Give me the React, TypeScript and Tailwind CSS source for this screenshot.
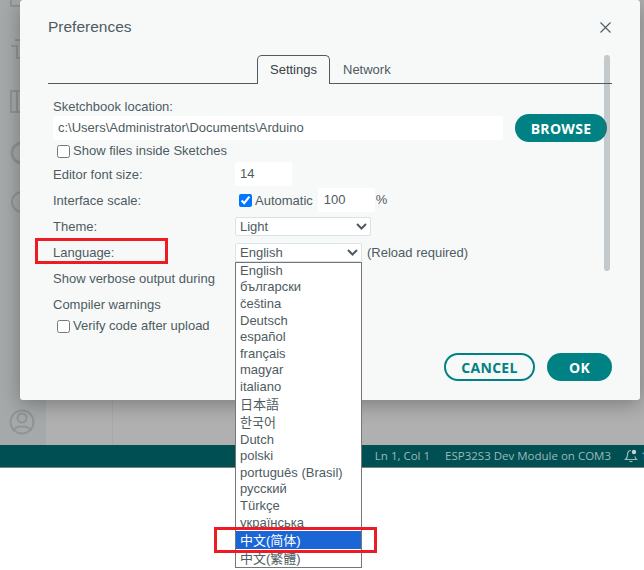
import React from "react";

const LANGS: Array<{ name: string; tall?: boolean; active?: boolean }> = [
  { name: "English" },
  { name: "български" },
  { name: "čeština" },
  { name: "Deutsch" },
  { name: "español" },
  { name: "français" },
  { name: "magyar" },
  { name: "italiano" },
  { name: "日本語", tall: true },
  { name: "한국어", tall: true },
  { name: "Dutch" },
  { name: "polski" },
  { name: "português (Brasil)" },
  { name: "русский" },
  { name: "Türkçe" },
  { name: "українська" },
  { name: "中文(简体)", tall: true, active: true },
  { name: "中文(繁體)", tall: true },
];

const FONT = "font-['Liberation_Sans','Noto_Sans_CJK_SC',sans-serif]";

function Chevron() {
  return (
    <svg width="11" height="7" viewBox="0 0 11 7" fill="none" stroke="#4e5b61" strokeWidth="2">
      <path d="M1 1l4.500 4.500L10 1" />
    </svg>
  );
}

function FakeSelect({ value, width }: { value: string; width: string }) {
  return (
    <div className={`flex h-[19px] items-center justify-between rounded-[2px] border border-[#dae3e3] bg-white pl-[4px] pr-[3px] leading-none ${width}`}>
      <span>{value}</span>
      <Chevron />
    </div>
  );
}

function Row({ label, children }: { label: string; children?: React.ReactNode }) {
  return (
    <div className="flex h-[26px] items-center">
      <div className="w-[182px] shrink-0 whitespace-nowrap pt-px">{label}</div>
      {children}
    </div>
  );
}

function CheckRow({ label }: { label: string }) {
  return (
    <label className="flex h-[18px] items-center pl-[4px]">
      <input type="checkbox" readOnly className="m-0 h-[13px] w-[13px]" />
      <span className="ml-[3px]">{label}</span>
    </label>
  );
}

function RailIcons() {
  return (
    <svg width="46" height="440" viewBox="0 0 46 440" fill="none" stroke="#8f9494" strokeWidth="2">
      <path d="M11 -4v10h12v-10" />
      <path d="M15 40h8v6h-2M11 46h6v12h8" />
      <rect x="11" y="91" width="6" height="21" />
      <rect x="17" y="91" width="8" height="21" />
      <circle cx="22" cy="153" r="10" strokeWidth="3" />
      <circle cx="22" cy="202" r="10" />
      <circle cx="22" cy="422" r="11.500" />
      <circle cx="22" cy="418" r="4.500" />
      <path d="M13 431c2-6 16-6 18 0" />
    </svg>
  );
}

export default function App() {
  return (
    <div className={`relative h-[570px] w-[644px] overflow-hidden bg-white text-[13px] text-[#4e5b61] ${FONT}`}>
      {/* IDE window dimmed behind the dialog */}
      <div className="flex h-[468px] flex-col border-b border-[#808080]">
        <div className="flex min-h-0 flex-1 bg-[#b0b0b0]">
          <div className="w-[46px] shrink-0 bg-[#a5a9a9]">
            <RailIcons />
          </div>
          <div className="w-[67px] shrink-0 border-r border-[#a9a9a9]" />
          <div className="flex-1" />
        </div>
        <div className="flex h-[22px] shrink-0 items-center justify-end bg-[#004f52] font-['Open_Sans',sans-serif] text-[11.500px] text-[#9db9ba]">
          <span>Ln 1, Col 1</span>
          <span className="ml-[15px]">ESP32S3 Dev Module on COM3</span>
          <svg className="ml-[13px] mr-[-1px]" width="14" height="14" viewBox="0 0 14 14" fill="none" stroke="#9db9ba" strokeWidth="1.200">
            <path d="M7 1.500C4.500 1.500 3.500 3.500 3.500 6c0 2.500-1 3.500-2 4.500h11c-1-1-1.500-1.500-1.500-3M5.500 12.500h3" />
            <circle cx="10" cy="3" r="2.200" fill="#c5d5d5" stroke="none" />
          </svg>
          <span className="ml-[4px] w-[3px] overflow-hidden">1</span>
        </div>
      </div>

      {/* Preferences dialog */}
      <div className="absolute left-[20px] top-0 h-[400px] w-[620px] rounded-[3px] bg-[#f7f9f9] shadow-[0_4px_20px_rgba(0,0,0,0.3)]">
        <div className="flex h-[55px] items-center justify-between pl-[28px] pr-[29px]">
          <span className="pb-px text-[15.500px]">Preferences</span>
          <svg width="11" height="11" viewBox="0 0 11 11" stroke="#4e5b61" strokeWidth="1.100">
            <path d="M0.500 0.500l10 10M10.500 0.500l-10 10" />
          </svg>
        </div>

        <div className="ml-[28px] mr-[28px] flex h-[29px] border-b border-[#4e5b61]">
          <div className="w-[209px] shrink-0" />
          <div className="relative -mb-px flex w-[73px] items-center justify-center rounded-t-[5px] border border-b-0 border-[#4e5b61] bg-[#f7f9f9] text-[#374146]">
            Settings
          </div>
          <div className="ml-[13px] flex items-center pt-px">Network</div>
        </div>

        <div className="pl-[33px] pt-[13px]">
          <div className="flex h-[18px] items-center pt-px">Sketchbook location:</div>
          <div className="mt-[1px] flex h-[24px] items-center">
            <input
              readOnly
              value="c:\Users\Administrator\Documents\Arduino"
              className="h-[24px] w-[450px] rounded-[2px] bg-white px-[5px] pb-px text-[#4e5b61] outline-none"
            />
            <button className="ml-[12px] h-[28px] w-[92px] shrink-0 rounded-full bg-[#008184] font-['Open_Sans',sans-serif] text-[14px] font-bold tracking-[0.3px] text-white">
              BROWSE
            </button>
          </div>
          <div className="mt-[2px]">
            <CheckRow label="Show files inside Sketches" />
          </div>
          <div className="mt-[1px]">
            <Row label="Editor font size:">
              <input readOnly value="14" className="h-[24px] w-[57px] rounded-[2px] bg-white px-[5px] pb-[2px] outline-none" />
            </Row>
            <Row label="Interface scale:">
              <label className="ml-[4px] flex items-center">
                <input type="checkbox" readOnly checked className="m-0 h-[13px] w-[13px] accent-[#0075ff]" />
                <span className="ml-[3px] pt-px">Automatic</span>
              </label>
              <input readOnly value="100" className="ml-[5px] h-[24px] w-[57px] rounded-[2px] bg-white px-[6px] pb-[2px] outline-none" />
              <span className="ml-[1px]">%</span>
            </Row>
            <Row label="Theme:">
              <FakeSelect value="Light" width="w-[136px]" />
            </Row>
            <Row label="Language:">
              <FakeSelect value="English" width="w-[127px]" />
              <span className="ml-[5px] pt-px">(Reload required)</span>
            </Row>
            <Row label="Show verbose output during" />
            <Row label="Compiler warnings" />
          </div>
          <CheckRow label="Verify code after upload" />
        </div>

        <div className="absolute bottom-[19px] right-[28px] flex gap-[12px] font-['Open_Sans',sans-serif] text-[14px] font-bold tracking-[0.3px]">
          <button className="h-[28px] w-[91px] rounded-full border-2 border-[#008184] text-[#008184]">CANCEL</button>
          <button className="h-[28px] w-[65px] rounded-full bg-[#008184] text-white">OK</button>
        </div>

        {/* scrollbar overlay */}
        <div className="absolute left-[584px] top-[55px] h-[216px] w-[6px] rounded-[3px] bg-[#4e5b61]/30" />
      </div>

      {/* open language list */}
      <div className="absolute left-[235px] top-[262px] w-[127px] border border-[#767676] bg-white leading-none">
        {LANGS.map((l) => (
          <div
            key={l.name}
            className={`flex items-center whitespace-nowrap pl-[4px] ${l.tall ? "h-[18px]" : "h-[16.600px] pb-[2px]"} ${
              l.active ? "bg-[#1a66d6] text-white" : ""
            }`}
          >
            {l.name}
          </div>
        ))}
      </div>

      {/* red annotation boxes */}
      <div className="absolute left-[35px] top-[238px] h-[26px] w-[133px] border-[3px] border-[#ed1c24]" />
      <div className="absolute left-[214px] top-[527px] h-[26px] w-[163px] border-[3px] border-[#ed1c24]" />
    </div>
  );
}
